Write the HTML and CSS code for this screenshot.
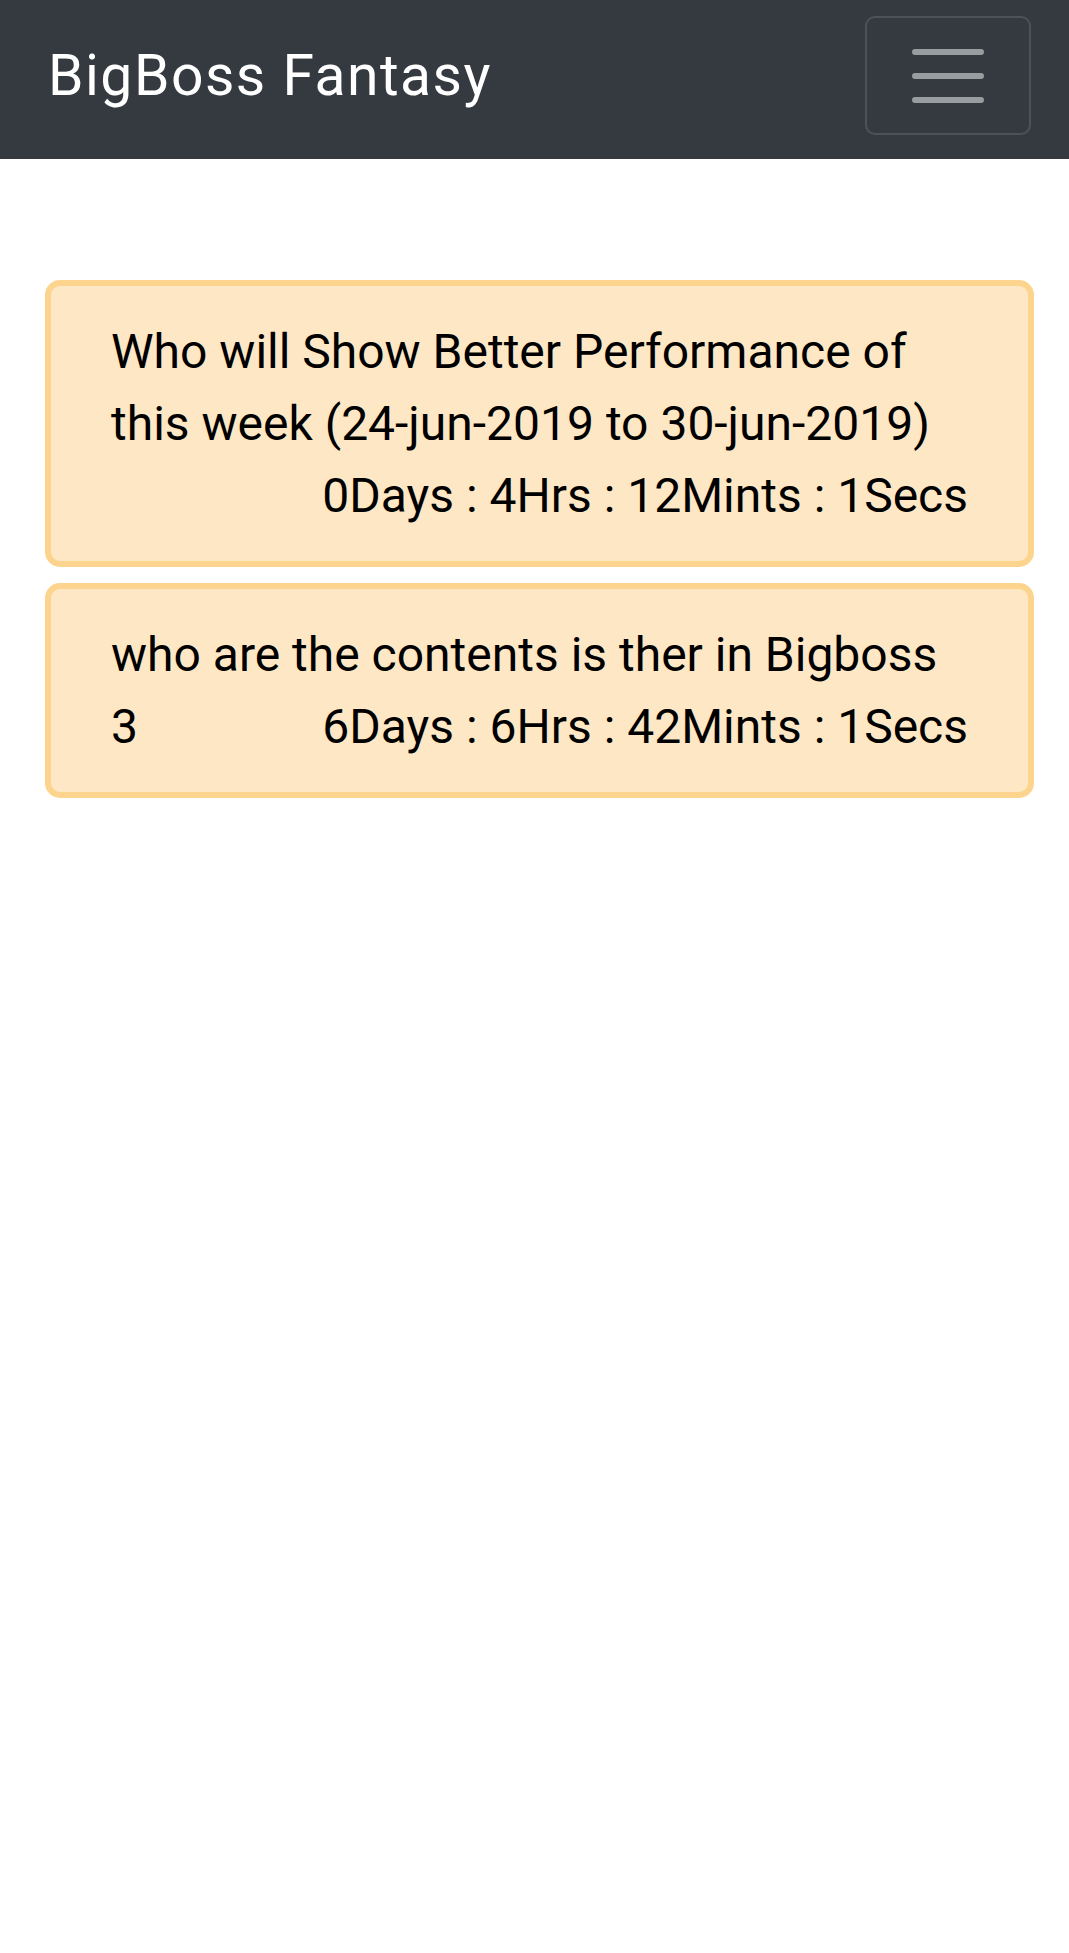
FILE: index.html
```html
<!DOCTYPE html>
<html lang="en">
<head>
<meta charset="utf-8">
<title>BigBoss Fantasy</title>
<link rel="stylesheet" href="styles.css">
</head>
<body>
<nav class="navbar">
  <a class="brand" href="#">BigBoss Fantasy</a>
  <button class="toggler" type="button" aria-label="Toggle navigation">
    <svg class="toggler-icon" viewBox="0 0 72 54" width="72" height="54">
      <path d="M3 3H69M3 27H69M3 51H69" stroke="#9a9da0" stroke-width="6" stroke-linecap="round" fill="none"/>
    </svg>
  </button>
</nav>
<main class="content">
  <div class="card">
    <p class="question">Who will Show Better Performance of this week (24-jun-2019 to 30-jun-2019) <span class="timer">0Days : 4Hrs : 12Mints : 1Secs</span></p>
  </div>
  <div class="card">
    <p class="question">who are the contents is ther in Bigboss 3 <span class="timer">6Days : 6Hrs : 42Mints : 1Secs</span></p>
  </div>
</main>
</body>
</html>
```
FILE: styles.css
```css
* { box-sizing: border-box; }
html, body { margin: 0; padding: 0; background: #fff; }
body {
  font-family: Roboto, "Noto Sans", "Liberation Sans", sans-serif;
  color: #000;
}
.navbar {
  height: 159px;
  background: #343a40;
  display: flex;
  align-items: center;
  justify-content: space-between;
  padding: 0 38px 0 48px;
}
.brand {
  color: #fff;
  text-decoration: none;
  font-size: 57px;
  letter-spacing: 1.5px;
  line-height: 1;
  padding-bottom: 9px;
}
.toggler {
  width: 166px;
  height: 119px;
  background: transparent;
  border: 2px solid #4c5257;
  border-radius: 10px;
  display: flex;
  align-items: center;
  justify-content: center;
  padding: 0;
  margin-top: -8px;
}
.toggler-icon { display: block; }
.content {
  padding: 121px 35px 0 45px;
  display: flex;
  flex-direction: column;
  gap: 16px;
}
.card {
  background: #fde7c4;
  border: 6px solid #fdd48e;
  border-radius: 15px;
  padding: 30px 60px 29px 60px;
}
.question {
  margin: 0;
  font-size: 48px;
  line-height: 72px;
}
.question::after {
  content: "";
  display: block;
  clear: both;
}
.timer { float: right; }
```
